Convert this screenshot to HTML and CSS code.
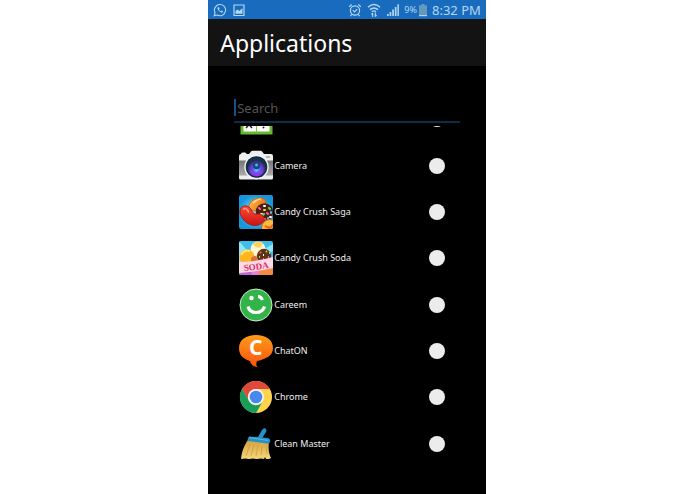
FILE: index.html
```html
<!DOCTYPE html>
<html lang="en">
<head>
<meta charset="utf-8">
<title>Applications</title>
<link rel="stylesheet" href="styles.css">
</head>
<body>
<main class="phone">
  <div class="status">
    <svg class="ic" viewBox="0 0 14 14" width="14" height="14" fill="none" stroke="currentColor"><path d="M1.2 12.8l.9-3A5.6 5.6 0 1 1 4.3 12z" stroke-width="1.1"/><path d="M4.6 4.2c-.6 2.600 2.400 5.500 4.900 5.300l.6-1.200-1.500-.8-.8.8c-.9-.4-1.500-1-1.900-1.900l.7-.7-.6-1.500z" fill="currentColor" stroke="none"/></svg>
    <svg class="ic" viewBox="0 0 14 14" width="14" height="14"><path d="M2 2h10v10.500H2z" fill="none" stroke="currentColor" stroke-width="1.200"/><path d="M3.500 10.800V8l2-1.500 1.800 1.600 3.200-3v5.700z" fill="currentColor"/></svg>
    <span class="grow"></span>
    <svg class="ic" viewBox="0 0 14 14" width="14" height="14" fill="none" stroke="currentColor" stroke-width="1.200"><circle cx="7" cy="7.500" r="4.600"/><path d="M4.800 7.200L6.600 9l2.600-2.800M1.200 3.700l2.500-2.200M12.800 3.700l-2.500-2.200M3.600 11.500l-1.200 1.600M10.400 11.500l1.200 1.600"/></svg>
    <svg class="ic wifi" viewBox="0 0 14 14" width="14" height="14" fill="none" stroke="currentColor" stroke-width="1.400"><path d="M1 4.200Q7-1 13 4.200M3 6.600q4-3.400 8 0M5 8.700q2-1.600 4 0"/><path d="M5.700 14V10M4.400 11.500l1.300-1.600M8.300 9.500v4M9.600 12l-1.300 1.700" stroke-width="1.100"/></svg>
    <svg class="ic signal" viewBox="0 0 14 14" width="14" height="14" fill="currentColor"><path d="M1 11h1.700v2H1zM3.600 9h1.700v4H3.600zM6.200 6.500h1.700V13H6.200zM8.800 4h1.700v9H8.800zM11.400 1.200h1.500V13h-1.500z"/></svg>
    <span class="percent">9%</span>
    <svg class="battery" viewBox="0 0 8 14" width="8" height="14"><path d="M2.500 1h3v1.200H8V13H0V2.200h2.500z" fill="#6598bc"/><path d="M0 12h8v1.200H0z" fill="#b4d3e9"/></svg>
    <time class="clock">8:32 PM</time>
  </div>
  <header class="bar"><h1>Applications</h1></header>
  <section class="content">
    <input class="search" type="text" placeholder="Search" aria-label="Search">
    <div class="viewport">
      <ul class="list">
        <li><label class="row"><svg class="app" viewBox="0 0 34 34"><path d="M3 3h29v28H3z" fill="#fff" stroke="#65b82e" stroke-width="3"/><path d="M17.500 3v28M3 17h29" stroke="#82b65a"/><path d="M7 19l6 7M13 19l-6 7M21 22h7" stroke="#222" stroke-width="1.500"/><circle cx="24.500" cy="25.500" r="1" fill="#222"/></svg><span class="name"></span><input type="checkbox" aria-label="Calculator"></label></li>
        <li><label class="row"><svg class="app" viewBox="0 0 34 34"><defs><radialGradient id="lens" cx=".5" cy=".65"><stop offset="0" stop-color="#77c8f3"/><stop offset=".35" stop-color="#426eea"/><stop offset=".7" stop-color="#6634ba"/><stop offset="1" stop-color="#163149"/></radialGradient><linearGradient id="body" x2="0" y2="1"><stop stop-color="#777"/><stop offset="1" stop-color="#aaa"/></linearGradient></defs><path d="M2 5q0-1.500 1.500-1.500H6Q7.500 3.500 7.500 5H10l2-2.500q.6-.7 1.500-.7h8q1 0 1.600.7L25 5h7q2 0 2 2v22q0 1.500-1.500 1.500h-31Q0 30.500 0 29V7q0-2 2-2z" fill="#eee"/><path d="M0 11.500h34v15H0z" fill="url(#body)"/><path d="M27 7h4v2h-4z" fill="#b5b5b5"/><circle cx="17.500" cy="18" r="12.200" fill="#f6f6f6"/><circle cx="17.500" cy="18" r="10.800" fill="#102c43"/><circle cx="17.500" cy="18" r="9.500" fill="url(#lens)"/><circle cx="17.500" cy="16.500" r="3.700" fill="#1d3f8c"/><circle cx="17.500" cy="16" r="1.500" fill="#54b9d6"/><path d="M10.500 21q7 5 14 0-2 6-7 6t-7-6z" fill="#8f3cf0"/></svg><span class="name">Camera</span><input type="checkbox"></label></li>
        <li><label class="row"><svg class="app" viewBox="0 0 34 34"><defs><radialGradient id="sky"><stop stop-color="#a6edff"/><stop offset="1" stop-color="#1697dc"/></radialGradient><linearGradient id="orange" x2="1" y2="1"><stop stop-color="#ffc451"/><stop offset="1" stop-color="#e45d08"/></linearGradient><linearGradient id="red" x2="0" y2="1"><stop stop-color="#ff4a34"/><stop offset="1" stop-color="#c91414"/></linearGradient><clipPath id="tile"><rect width="34" height="34" rx="2"/></clipPath></defs><g clip-path="url(#tile)"><path d="M0 0h34v34H0z" fill="url(#sky)"/><ellipse cx="18.500" cy="9.500" rx="9" ry="6" transform="rotate(-24 18.500 9.500)" fill="url(#orange)" stroke="#c45b13" stroke-width=".7"/><path d="M14 8q4-4 8-4" stroke="#ffe087" stroke-width="1.500" fill="none"/><circle cx="25.500" cy="17" r="8.800" fill="#482016"/><g stroke-width="2" stroke-linecap="round"><path d="M20 13l1 1M28 18l1 1M25 24h1" stroke="#f95c9f"/><path d="M25 11h1M22 19h1M31 22h1" stroke="#fff"/><path d="M30 13l1 1M24 20l1-1" stroke="#65d957"/><path d="M25 15h1M22 23l1-1" stroke="#ffd33c"/><path d="M32 17v1M29 23v1" stroke="#54bdf2"/></g><path d="M2 13c3-4 9-2 11 3 1 3 4 3 7 3 5 0 7 6 3 9-6 5-15 2-19-4-3-4-4-8-2-11z" fill="url(#red)" stroke="#a3130f" stroke-width=".8"/><path d="M4.500 14c2-1 4 0 5 3" stroke="#ff9a80" stroke-width="1.500" stroke-linecap="round" fill="none"/><circle cx="31" cy="33" r="8.500" fill="#ffba42" stroke="#d35c12"/><path d="M26 31l5 2 4-4M30 33l-2 4" stroke="#ef6812" stroke-width="2.200" fill="none"/></g></svg><span class="name">Candy Crush Saga</span><input type="checkbox"></label></li>
        <li><label class="row"><svg class="app" viewBox="0 0 34 34"><g clip-path="url(#tile)"><path d="M0 0h34v34H0z" fill="#40bdeb"/><path d="M0 0l13 15L34 3v7L0 26z" fill="#91e4fa"/><circle cx="19" cy="8" r="7.500" fill="#fff6cd"/><path d="M14 3q5-4 10 0l-4 4q-4-1-6-4z" fill="#f9d15b"/><circle cx="8" cy="16" r="7.500" fill="#ffb51d"/><path d="M2 14q4-6 9-4" stroke="#ffe875" stroke-width="2" fill="none"/><circle cx="25" cy="15" r="7.200" fill="#603018"/><path d="M21 11l1 1M29 16h1M24 18h1" stroke="#ff6a6a" stroke-width="2"/><path d="M27 10l1 1M20 16h1M30 12h1" stroke="#a3df66" stroke-width="2"/><path d="M24 14h1" stroke="#fff" stroke-width="2"/><path d="M12 17q5-5 8 3l-8 3z" fill="#d96d37"/><path d="M0 27h34v7H0z" fill="#e881ce"/><circle cx="28" cy="33" r="8" fill="#f18a43"/><circle cx="7" cy="34" r="6" fill="#b968d5"/><path d="M0 21q16 0 34-5v11q-17 4-34 5z" fill="#ffd9e5"/><text x="5" y="30" transform="rotate(-7 6 29)" class="soda">SODA</text></g></svg><span class="name">Candy Crush Soda</span><input type="checkbox"></label></li>
        <li><label class="row"><svg class="app" viewBox="0 0 34 34"><circle cx="17" cy="17" r="16" fill="#33b44a" stroke="#c9edce"/><circle cx="12.500" cy="10" r="2.200" fill="#fff"/><path d="M19 8.500q3 0 4.500 3.500" fill="none" stroke="#fff" stroke-width="3"/><path d="M9 18.500c2 8 14 8 16.500 0" fill="none" stroke="#fff" stroke-width="3.200"/></svg><span class="name">Careem</span><input type="checkbox"></label></li>
        <li><label class="row"><svg class="app" viewBox="0 0 34 34"><defs><linearGradient id="chat" x2="0" y2="1"><stop stop-color="#ff9c18"/><stop offset="1" stop-color="#f9520d"/></linearGradient></defs><path d="M17 1C27 1 34 6 34 14c0 7-6 11-16 13-1 3-1 5 1 6-4 0-7-2-8-6C4 25 0 21 0 14 0 6 7 1 17 1z" fill="url(#chat)"/><text x="10" y="21" class="chat-c">C</text></svg><span class="name">ChatON</span><input type="checkbox"></label></li>
        <li><label class="row"><svg class="app" viewBox="0 0 34 34"><circle cx="17" cy="17" r="16" fill="#ffd34c"/><path d="M3.100 9A16 16 0 0 1 30.900 9H17a8 8 0 0 0-7 12z" fill="#df493d"/><path d="M3.100 9A16 16 0 0 0 17 33l7-12a8 8 0 0 1-14 0z" fill="#169e5a"/><circle cx="17" cy="17" r="8" fill="#f5f5f0"/><circle cx="17" cy="17" r="6.300" fill="#4688ee"/></svg><span class="name">Chrome</span><input type="checkbox"></label></li>
        <li><label class="row"><svg class="app" viewBox="0 0 34 34"><defs><linearGradient id="straw" x2="0" y2="1"><stop stop-color="#d6a03c"/><stop offset="1" stop-color="#f5d779"/></linearGradient></defs><path d="M9 13C6 17 3 23 2 32l4-.5 4 .5 4-.5 4 .5 4-.5 3 .5 1-2 1 2h3l2-1c-2-4-3-9-2-16z" fill="url(#straw)"/><path d="M11 17L7 29M15 17l-3 12M19 18l-2 11M23 19l-1 9M27 19l1 8" stroke="#b98838" stroke-width=".5"/><path d="M10 9.500l9 .5 4-7Q24.500.500 26.500 1.500q1.500 1 .5 3.500l-3.500 5.500 5.500.500q3 1 2 4-.7 2-3 1.500L9 14q-1-1 1-4.500z" fill="#2591c9"/><path d="M10 10.500l19 3" stroke="#58b9e3"/></svg><span class="name">Clean Master</span><input type="checkbox"></label></li>
      </ul>
    </div>
  </section>
</main>
</body>
</html>
```
FILE: styles.css
```css
* {
  box-sizing: border-box;
}

body {
  margin: 0;
  padding-right: 1px;
  background: #fff;
  font-family: "Noto Sans", sans-serif;
}

.phone {
  width: 40%;
  min-height: 100vh;
  margin: 0 auto;
  background: #000;
  color: #eee;
}

.status {
  display: flex;
  align-items: center;
  height: 19px;
  padding: 0 5px;
  gap: 5px;
  background: #186bbd;
  color: #b4d8f3;
  white-space: nowrap;
}

.grow {
  flex: 1;
}

.status svg {
  flex: none;
}

.percent {
  margin-left: -1px;
  font-size: 9px;
}

.battery {
  margin-left: -3px;
}

.clock {
  font-size: 13px;
  line-height: 18px;
}

.bar {
  padding: 9px 12px 7px;
  background: #131313;
}

.bar h1 {
  margin: 0;
  font-size: 23px;
  line-height: 31px;
  font-weight: 400;
  color: #fff;
}

.content {
  padding: 28px 26px;
}

.search {
  display: block;
  width: 100%;
  height: 29px;
  padding: 0 3px;
  border: 0;
  border-bottom: 2px solid #0c2c49;
  border-radius: 0;
  outline: 0;
  background: linear-gradient(#15508c, #15508c) 0 5px / 2px 17px no-repeat;
  color: #eee;
  font: 13px "Noto Sans", sans-serif;
}

.search::placeholder {
  color: #555;
  opacity: 1;
}

.viewport {
  margin-top: 3px;
  overflow: hidden;
}

.list {
  display: grid;
  grid-auto-rows: 1fr;
  height: 371px;
  margin: -30px 0 0;
  padding: 0;
  list-style: none;
}

.row {
  display: flex;
  align-items: center;
  height: 100%;
  padding: 0 15px 0 5px;
}

.app {
  flex: none;
  width: 34px;
  height: 34px;
}

.name {
  flex: 1;
  padding-left: 1px;
  font-size: 9px;
  line-height: 14px;
}

.row input {
  appearance: none;
  width: 16px;
  height: 16px;
  margin: 0;
  border-radius: 50%;
  background: #ececec;
}

.row input:checked {
  background: #2b8ad6;
}

.soda {
  font: bold 9px "Liberation Serif", serif;
  fill: #d52c65;
}

.chat-c {
  font: bold 21px "Open Sans", sans-serif;
  fill: #fff;
}
```
